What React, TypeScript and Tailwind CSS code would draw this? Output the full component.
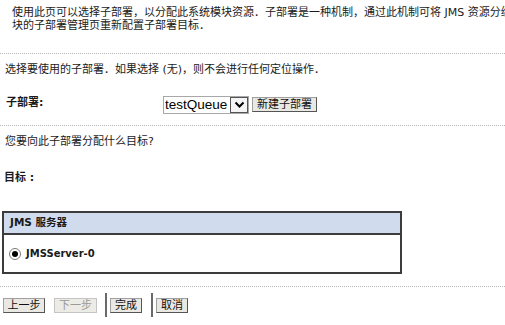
import React from 'react';

const Dots = ({ className = '' }: { className?: string }) => (
  <div className={`border-t border-dotted border-[#b8b8b8] ${className}`} />
);

const Btn = ({ label, disabled, w }: { label: string; disabled?: boolean; w: string }) => (
  <button
    disabled={disabled}
    className={`${w} h-[15px] flex items-center justify-center text-[11px] leading-none border ${
      disabled
        ? 'bg-[#ecebe6] border-[#c4c4c0] text-[#9a9a96]'
        : 'bg-[#e9e8e2] border-[#a0a0a0] border-r-[#555] border-b-[#555] text-[#111]'
    }`}
  >
    {label}
  </button>
);

const App: React.FC = () => {
  return (
    <div className="w-[505px] h-[325px] overflow-hidden bg-white text-[11px] text-[#1a1a1a] font-['DejaVu_Sans','Noto_Sans_CJK_SC',sans-serif]">
      <p className="pt-[6px] pl-[12px] leading-[13px] whitespace-nowrap">
        使用此页可以选择子部署，以分配此系统模块资源．子部署是一种机制，通过此机制可将 JMS 资源分组并将这些资源定位到服务器资源．然后您可以从模
        <br />
        块的子部署管理页重新配置子部署目标．
      </p>

      <Dots className="mt-[21px]" />

      <p className="mt-[9px] pl-[5px] leading-[13px]">
        选择要使用的子部署．如果选择 (无)，则不会进行任何定位操作．
      </p>

      <div className="mt-[20px] flex items-start pl-[6px]">
        <label className="w-[157px] font-bold leading-[13px]">子部署:</label>
        <div className="flex h-[18px] w-[86px] border border-[#a8a8a8] bg-white">
          <select className="appearance-none flex-1 pl-[1px] text-[13.5px] leading-[16px] font-['Liberation_Sans',Arial,sans-serif] text-black bg-white outline-none">
            <option>testQueue</option>
          </select>
          <span className="w-[18px] h-[16px] flex items-center justify-center border border-[#555] bg-[#f4f4f4]">
            <svg width="11" height="8" viewBox="0 0 11 8">
              <polyline points="1.5,1.5 5.5,5.5 9.5,1.5" fill="none" stroke="#000" strokeWidth="2" />
            </svg>
          </span>
        </div>
        <div className="ml-[3px] mt-[1px]">
          <Btn label="新建子部署" w="w-[65px]" />
        </div>
      </div>

      <Dots className="mt-[11px]" />

      <p className="mt-[9px] pl-[5px] leading-[13px]">您要向此子部署分配什么目标?</p>

      <p className="mt-[23px] pl-[4px] font-bold leading-[13px]">目标 :</p>

      <div className="mt-[27px] ml-[2px] w-[400px] border-2 border-[#3c3c3c]">
        <div className="h-[22px] flex items-center pl-[6px] bg-[#d0dcee] border-b-2 border-[#3c3c3c] font-bold text-[10.5px]">
          JMS 服务器
        </div>
        <div className="h-[37px] flex items-center pl-[5px] gap-[5px]">
          <span className="w-[12px] h-[12px] rounded-full border border-[#7a7a7a] bg-white flex items-center justify-center">
            <span className="w-[6px] h-[6px] rounded-full bg-black" />
          </span>
          <span className="font-bold text-[10px]">JMSServer-0</span>
        </div>
      </div>

      <Dots className="mt-[12px]" />

      <div className="mt-[6px] h-[24px] flex items-center pl-[3px]">
        <Btn label="上一步" w="w-[42px]" />
        <div className="ml-[9px]">
          <Btn label="下一步" w="w-[43px]" disabled />
        </div>
        <span className="ml-[8px] w-[2px] h-[24px] bg-[#6a6a6a]" />
        <div className="ml-[3px]">
          <Btn label="完成" w="w-[32px]" />
        </div>
        <span className="ml-[9px] w-[2px] h-[24px] bg-[#6a6a6a]" />
        <div className="ml-[3px]">
          <Btn label="取消" w="w-[32px]" />
        </div>
      </div>
    </div>
  );
};

export default App;
